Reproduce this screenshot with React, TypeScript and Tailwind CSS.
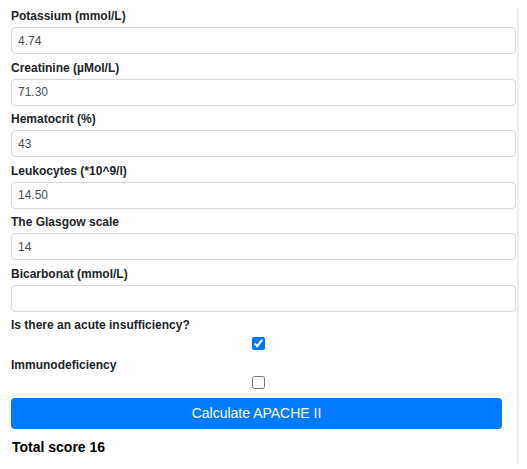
import { useState } from "react";

const fields = [
  { label: "Potassium (mmol/L)", value: "4.74" },
  { label: "Creatinine (µMol/L)", value: "71.30" },
  { label: "Hematocrit (%)", value: "43" },
  { label: "Leukocytes (*10^9/l)", value: "14.50" },
  { label: "The Glasgow scale", value: "14" },
  { label: "Bicarbonat (mmol/L)", value: "" },
];

export default function App() {
  const [acute, setAcute] = useState(true);
  const [immuno, setImmuno] = useState(false);

  return (
    <div className="bg-white pt-[8px] font-['Liberation_Sans',Arial,sans-serif] text-[#212529]">
      <div className="w-[519px] h-[455px] border-r-2 border-[#efefef] pl-[11px] pr-px">
        {fields.map((f) => (
          <div key={f.label} className="mb-[5.5px]">
            <label className="block text-[12px] leading-[17px] font-bold">{f.label}</label>
            <input
              type="text"
              defaultValue={f.value}
              className="mt-[2px] block w-full h-[27px] rounded-[4px] border border-[#d6d9dc] px-[6px] text-[12px] text-[#495057] outline-none"
            />
          </div>
        ))}

        <label className="block mt-[-0.5px] text-[12px] leading-[17px] font-bold">
          Is there an acute insufficiency?
        </label>
        <div className="w-[491px] pl-[4px] flex justify-center mt-[0px] h-[19px] items-center">
          <input
            type="checkbox"
            checked={acute}
            onChange={() => setAcute(!acute)}
            className="w-[13px] h-[13px] m-0 accent-[#0075ff]"
          />
        </div>
        <label className="block mt-[4px] text-[12px] leading-[17px] font-bold">Immunodeficiency</label>
        <div className="w-[491px] pl-[4px] flex justify-center h-[17px] items-center">
          <input
            type="checkbox"
            checked={immuno}
            onChange={() => setImmuno(!immuno)}
            className="w-[13px] h-[13px] m-0"
          />
        </div>

        <button className="mt-[7px] block w-[491px] h-[31px] rounded-[4px] bg-[#007bff] text-white text-[14px]">
          Calculate APACHE II
        </button>

        <div className="mt-[8px] pl-px text-[14px] leading-[20px] font-bold text-black">Total score 16</div>
      </div>
    </div>
  );
}
